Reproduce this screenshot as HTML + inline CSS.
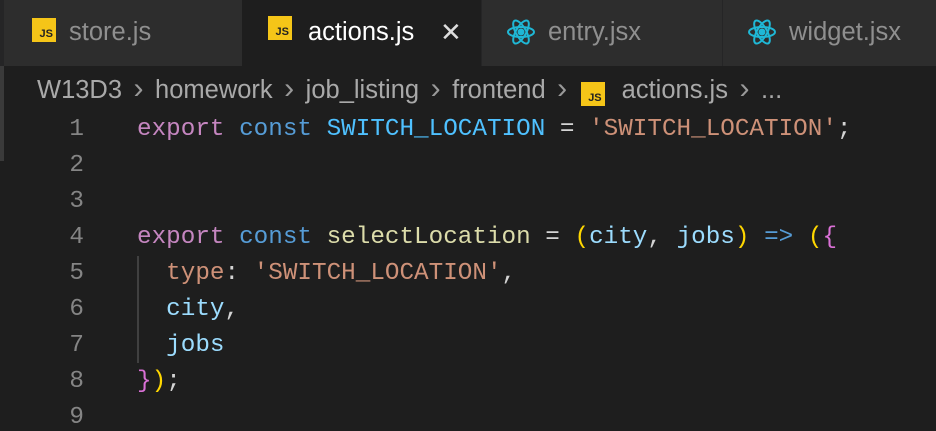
<!DOCTYPE html><html><head><style>
body{margin:0;width:936px;height:416px;background:#1e1e1e;overflow:hidden;position:relative;font-family:"Liberation Sans",sans-serif}
.tabs{position:absolute;top:0;left:0;width:936px;height:66px;background:#252526}
.tab{position:absolute;top:0;height:66px;background:#2d2d2d;font-size:25.5px;color:#8f8f8f}
.tab span{position:absolute;top:18px}
.js{position:absolute;width:24px;height:24px;background:#f5c518;color:#222;font:bold 11px "Liberation Sans",sans-serif;display:flex;align-items:flex-end;justify-content:flex-end;padding:0 3px 2px 0;box-sizing:border-box}
.bc{position:absolute;top:76px;left:37px;font-size:25.5px;color:#a9a9a9;white-space:pre}
.ch{display:inline-block;width:33px;text-align:center;font-size:30px;line-height:20px;color:#999}
.code{position:absolute;left:0;top:112px;font-family:"Liberation Mono",monospace;font-size:24.3px}
.ln{position:absolute;width:84px;text-align:right;color:#858585}
.l{position:absolute;left:137px;white-space:pre;color:#d4d4d4}
.k{color:#c586c0}.b{color:#569cd6}.c{color:#4fc1ff}.f{color:#dcdcaa}.s{color:#ce9178}.v{color:#9cdcfe}.y{color:#ffd700}.p{color:#da70d6}
</style></head><body>
<div class="tabs">
<div class="tab" style="left:4px;width:238px"><div class="js" style="left:28px;top:18px">JS</div><span style="left:65px">store.js</span></div>
<div class="tab" style="left:242px;width:239px;background:#1e1e1e;color:#fff"><div class="js" style="left:26px;top:16px">JS</div><span style="left:66px">actions.js</span><span style="left:198px;color:#ddd;font-size:26px;top:17px">✕</span></div>
<div class="tab" style="left:482px;width:240px"><svg style="position:absolute;left:24px;top:17px" width="30" height="30" viewBox="-15 -15 30 30" fill="none" stroke="#1fb8d6" stroke-width="2"><ellipse rx="13" ry="5"/><ellipse rx="13" ry="5" transform="rotate(60)"/><ellipse rx="13" ry="5" transform="rotate(120)"/><circle r="2.5" fill="#1fb8d6"/></svg><span style="left:66px">entry.jsx</span></div>
<div class="tab" style="left:723px;width:213px"><svg style="position:absolute;left:24px;top:17px" width="30" height="30" viewBox="-15 -15 30 30" fill="none" stroke="#1fb8d6" stroke-width="2"><ellipse rx="13" ry="5"/><ellipse rx="13" ry="5" transform="rotate(60)"/><ellipse rx="13" ry="5" transform="rotate(120)"/><circle r="2.5" fill="#1fb8d6"/></svg><span style="left:66px">widget.jsx</span></div>
</div>
<div style="position:absolute;left:0;top:66px;width:4px;height:95px;background:#3a3a3a"></div>
<div class="bc">W13D3<span class="ch">›</span>homework<span class="ch">›</span>job_listing<span class="ch">›</span>frontend<span class="ch">›</span><span class="js" style="position:relative;display:inline-flex;vertical-align:-3px;margin:0 17px 0 2px">JS</span>actions.js<span class="ch">›</span>...</div>
<div style="position:absolute;left:137px;top:256px;width:2px;height:107px;background:#404040"></div>
<div class="code">
<div class="ln" style="top:4px">1</div><div class="l" style="top:4px"><span class="k">export</span> <span class="b">const</span> <span class="c">SWITCH_LOCATION</span> = <span class="s">'SWITCH_LOCATION'</span>;</div>
<div class="ln" style="top:40px">2</div>
<div class="ln" style="top:76px">3</div>
<div class="ln" style="top:112px">4</div><div class="l" style="top:112px"><span class="k">export</span> <span class="b">const</span> <span class="f">selectLocation</span> = <span class="y">(</span><span class="v">city</span>, <span class="v">jobs</span><span class="y">)</span> <span class="b">=&gt;</span> <span class="y">(</span><span class="p">{</span></div>
<div class="ln" style="top:148px">5</div><div class="l" style="top:148px">  <span class="s">type</span>: <span class="s">'SWITCH_LOCATION'</span>,</div>
<div class="ln" style="top:184px">6</div><div class="l" style="top:184px">  <span class="v">city</span>,</div>
<div class="ln" style="top:220px">7</div><div class="l" style="top:220px">  <span class="v">jobs</span></div>
<div class="ln" style="top:256px">8</div><div class="l" style="top:256px"><span class="p">}</span><span class="y">)</span>;</div>
<div class="ln" style="top:292px">9</div>
</div>
</body></html>
